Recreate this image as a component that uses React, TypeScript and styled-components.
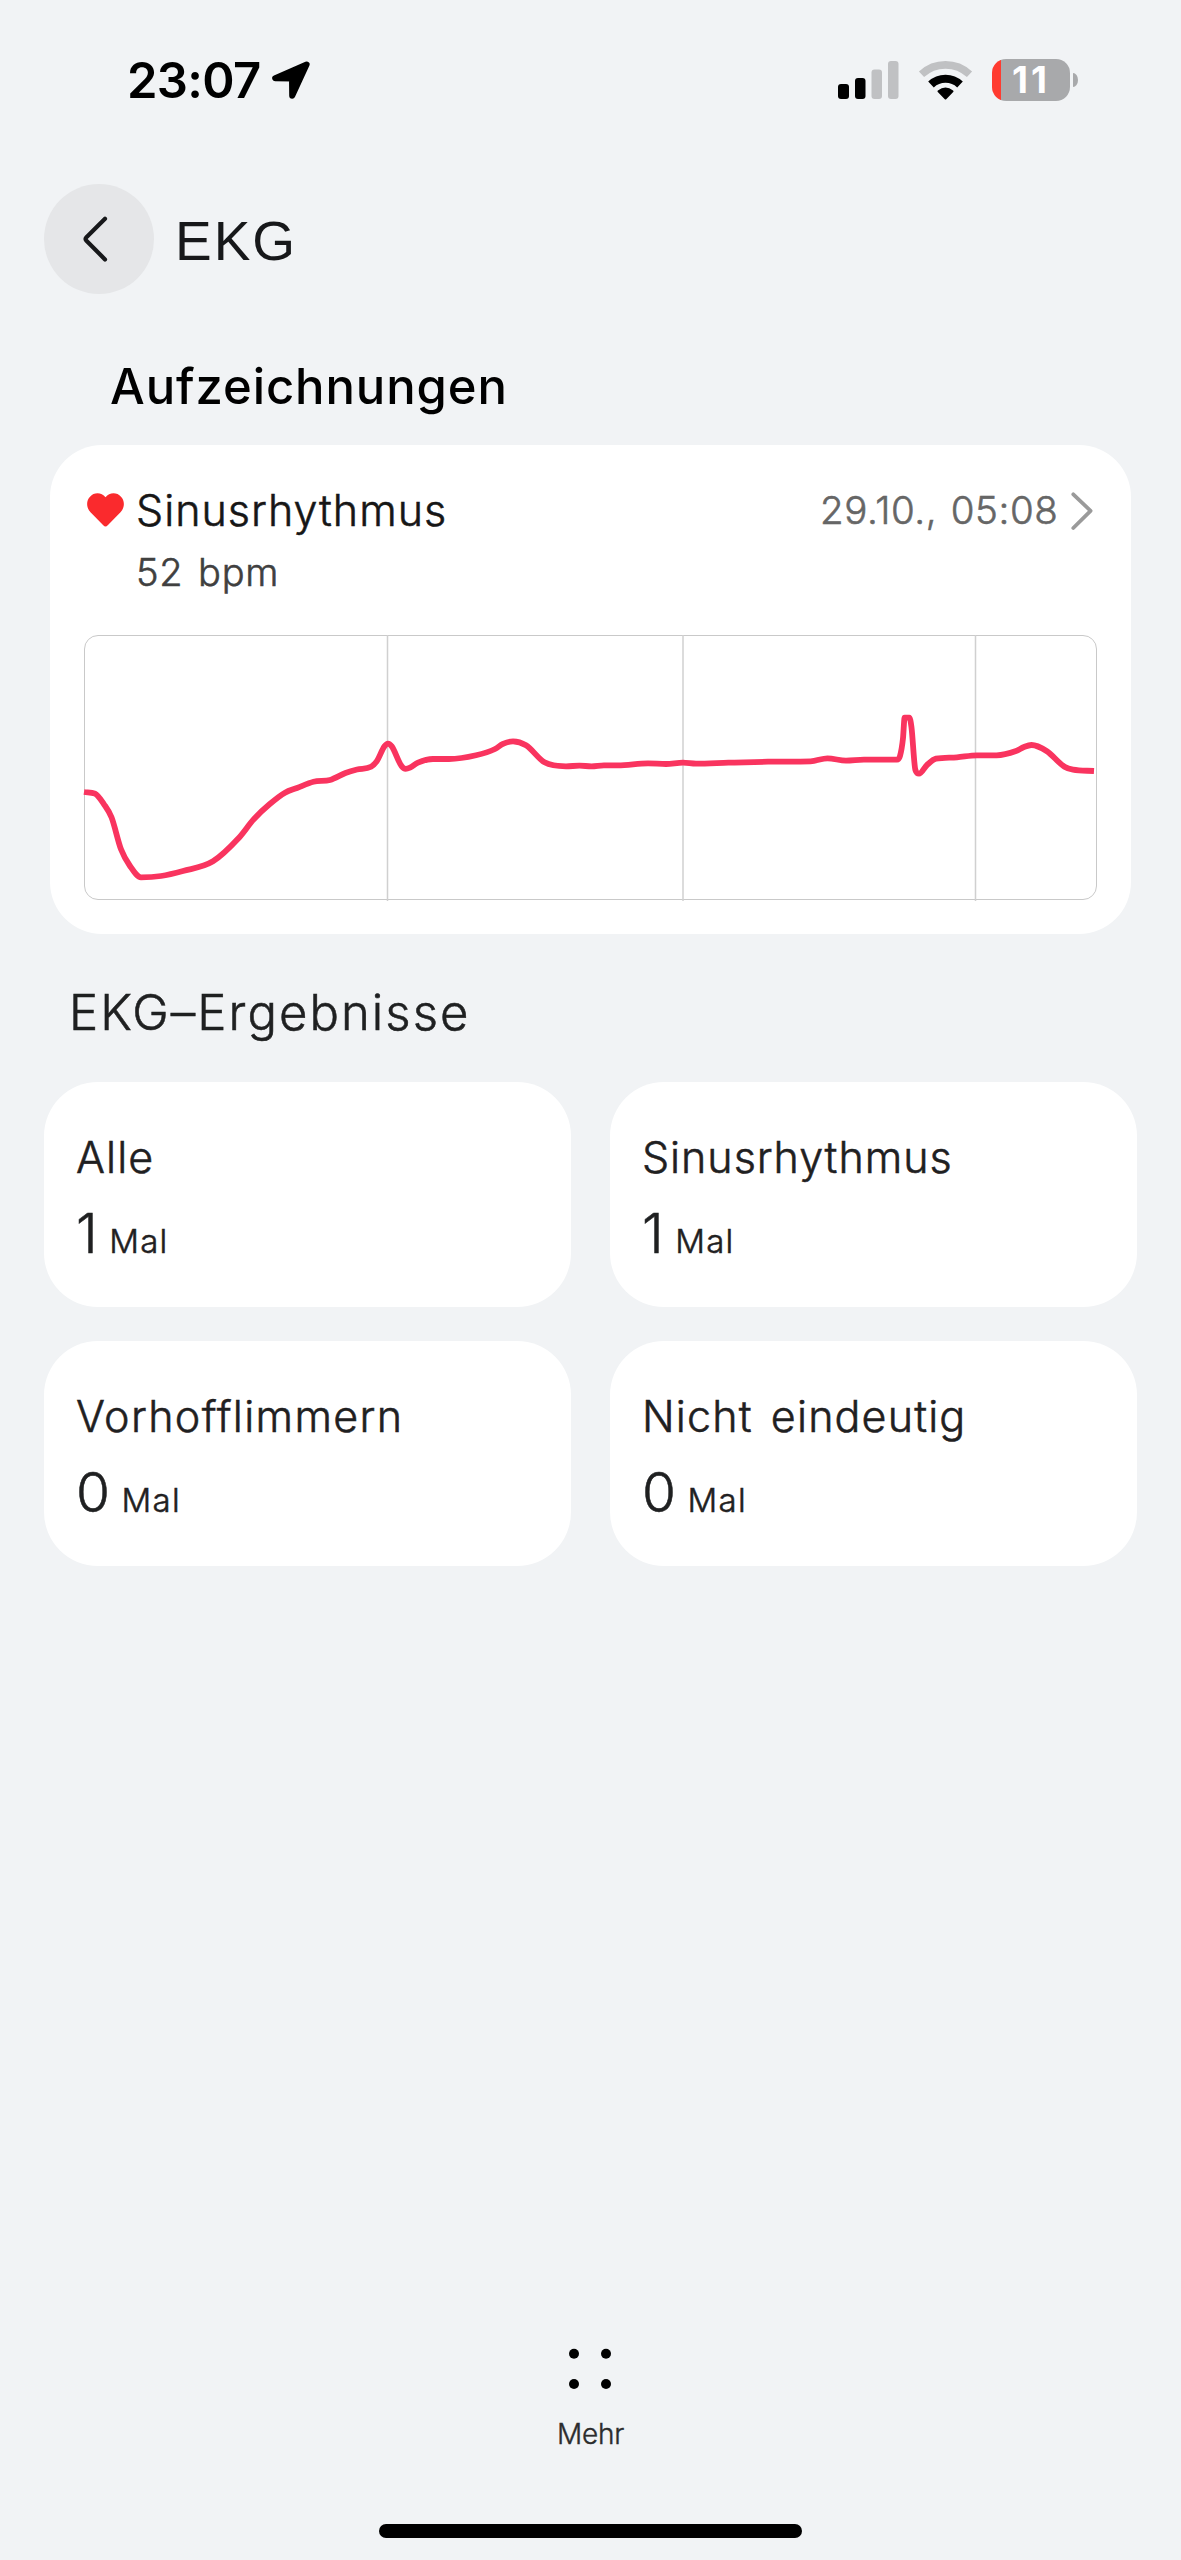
import React from "react";
import styled, { createGlobalStyle, css } from "styled-components";

const GlobalStyle = createGlobalStyle`
  * { box-sizing: border-box; }
  body {
    margin: 0;
    background: #f1f3f5;
    font-family: Inter, "Liberation Sans", sans-serif;
    font-weight: 300;
    color: #1f2021;
  }
  svg { display: block; flex: none; overflow: visible; }
`;

// Light face thickened to sit between the light and regular weights.
const bookWeight = css`
  font-weight: 300;
  -webkit-text-stroke: 0.55px currentColor;
`;

const Screen = styled.div`
  display: flex;
  flex-direction: column;
  width: 1181px;
  min-height: 2560px;
  padding-bottom: 22px;
`;

const StatusBar = styled.div`
  display: flex;
  align-items: center;
  justify-content: space-between;
  height: 160px;
  padding: 0 103px 0 127px;
  color: #000;
`;

const StatusGroup = styled.div<{ $gap: number }>`
  display: flex;
  align-items: center;
  gap: ${(p) => p.$gap}px;
`;

const Clock = styled.span`
  padding-top: 2px;
  font-size: 49px;
  line-height: 60px;
  font-weight: 600;
  letter-spacing: -0.7px;
`;

const Battery = styled.div`
  display: flex;
  align-items: center;
  gap: 3px;
`;

const BatteryBody = styled.div<{ $level: number }>`
  width: 78px;
  height: 42px;
  border-radius: 14px;
  background: linear-gradient(to right, #ff3b30 ${(p) => p.$level}%, #a8a9ab ${(p) => p.$level}%);
  color: #fff;
  font-size: 37px;
  line-height: 42px;
  font-weight: 700;
  letter-spacing: 3px;
  text-align: center;
`;

const BatteryTip = styled.div`
  width: 5px;
  height: 14px;
  border-radius: 0 5px 5px 0 / 0 7px 7px 0;
  background: #a8a9ab;
`;

const Header = styled.header`
  display: flex;
  align-items: center;
  gap: 21px;
  margin-top: 24px;
  padding-left: 44px;
`;

const BackButton = styled.button`
  display: flex;
  align-items: center;
  justify-content: center;
  width: 110px;
  height: 110px;
  padding: 0 8px 0 0;
  border: 0;
  border-radius: 50%;
  background: #e5e6e8;
`;

const PageTitle = styled.h1`
  margin: 0;
  padding-top: 4px;
  font: 400 55px/64px "Liberation Sans", Arial, sans-serif;
  letter-spacing: 2px;
  color: #17181a;
`;

const RecordsTitle = styled.h2`
  margin: 63px 0 0 110px;
  font-size: 49px;
  line-height: 60px;
  font-weight: 500;
  letter-spacing: 0.9px;
  color: #000;
`;

const RecordCard = styled.section`
  width: 1081px;
  height: 489px;
  margin: 28px 0 0 50px;
  padding: 38px 34px 0;
  border-radius: 52px;
  background: #fff;
`;

const RecordHead = styled.div`
  display: flex;
  align-items: center;
  height: 54px;
  padding: 0 4px 0 3px;
`;

const RecordName = styled.span`
  ${bookWeight}
  margin-left: 12px;
  font-size: 43px;
  line-height: 54px;
  letter-spacing: 1px;
  color: #161616;
`;

const RecordDate = styled.span`
  ${bookWeight}
  margin: 0 12.5px 0 auto;
  font-size: 38.5px;
  line-height: 54px;
  letter-spacing: 0.6px;
  word-spacing: 2px;
  color: #666;
`;

const HeartRate = styled.div`
  ${bookWeight}
  margin: 15px 0 0 52px;
  font-size: 38px;
  line-height: 40px;
  letter-spacing: 0.8px;
  word-spacing: 3px;
  color: #404040;
`;

const ChartFrame = styled.div`
  width: 1013px;
  height: 265px;
  margin-top: 43px;
  border: 1px solid #c9c9c9;
  border-radius: 14px;
`;

const ResultsTitle = styled.h2`
  ${bookWeight}
  margin: 49px 0 0 69px;
  font-size: 49px;
  line-height: 60px;
  letter-spacing: 2.05px;
`;

const ResultGrid = styled.section`
  display: grid;
  grid-template-columns: 1fr 1fr;
  grid-auto-rows: 225px;
  gap: 34px 39px;
  margin: 39px 44px 0;
`;

const ResultCard = styled.div`
  padding: 50px 32px 0;
  border-radius: 54px;
  background: #fff;
`;

const ResultLabel = styled.div<{ $tracking: number }>`
  ${bookWeight}
  font-size: 43px;
  line-height: 50px;
  letter-spacing: ${(p) => p.$tracking}px;
  word-spacing: 5px;
`;

const ResultValue = styled.div`
  display: flex;
  align-items: baseline;
  gap: 11.5px;
  margin-top: 21px;
`;

const Count = styled.span`
  ${bookWeight}
  font-size: 55px;
  line-height: 60px;
`;

const Unit = styled.span`
  ${bookWeight}
  font-size: 33px;
  line-height: 40px;
  letter-spacing: 1.3px;
`;

const MoreButton = styled.button`
  display: flex;
  flex-direction: column;
  align-items: center;
  gap: 27px;
  align-self: center;
  margin-top: auto;
  padding: 0;
  border: 0;
  background: none;
  color: #2b2c2d;
  font: 300 28px/34px Inter, "Liberation Sans", sans-serif;
  letter-spacing: -0.2px;
  -webkit-text-stroke: 0.4px currentColor;
`;

const HomeIndicator = styled.div`
  align-self: center;
  width: 423px;
  height: 14px;
  margin-top: 73px;
  border-radius: 7px;
  background: #000;
`;

type Point = [number, number];

const wave: Point[] = [
  [0, 157], [11, 158.7], [20, 169.3], [27.5, 182.3], [37, 214.3], [46, 231], [57, 242.3],
  [77, 241], [99, 236], [129, 226.3], [154.5, 203.3], [170, 184], [185.5, 169.3], [201, 157.7],
  [213, 153], [229.5, 146.7], [246, 145], [261.5, 138], [273, 134.5], [287, 131.7], [292.5, 126.7],
  [300.5, 111.3], [304, 108.6], [307.7, 111.3], [317.5, 131], [321.7, 133.8], [326, 132.6],
  [334, 127.7], [349, 124], [365, 124], [392, 120.3], [411, 114], [419, 108.8], [429, 106.3],
  [442, 110.3], [460.5, 127.3], [482, 131.3], [495.5, 130.7], [507.5, 131.3], [520, 130.3],
  [534, 130.3], [564, 128.3], [582, 129], [599, 127.7], [612, 128.7], [644.5, 127.7],
  [684, 126.7], [726.5, 126.3], [743.5, 123.3], [762, 125.7], [780, 124.7], [813, 124.7],
  [816, 121], [819, 103.3], [820.6, 82.7], [825.3, 82.7], [827.4, 91.7], [831.4, 135], [835, 138.7],
  [843, 130], [852, 123.7], [873, 122.3], [893, 120.3], [912.5, 120.3], [932, 116], [940, 112],
  [947.5, 110], [962.5, 116], [980.5, 131.7], [989, 134.7], [1010, 136],
];

// Monotone cubic interpolation: smooth between samples, flat at each local extreme.
function smoothPath(p: Point[]): string {
  const n = p.length;
  const slope = (i: number) => (p[i + 1][1] - p[i][1]) / (p[i + 1][0] - p[i][0]);
  const tangent = p.map((_, i) => {
    if (i === 0) return slope(0);
    if (i === n - 1) return slope(n - 2);
    const a = slope(i - 1);
    const b = slope(i);
    if (a * b <= 0) return 0;
    return Math.sign(a) * Math.min(Math.abs(a + b) / 2, 3 * Math.abs(a), 3 * Math.abs(b));
  });
  let d = `M${p[0][0]} ${p[0][1]}`;
  for (let i = 0; i < n - 1; i++) {
    const h = (p[i + 1][0] - p[i][0]) / 3;
    d += `C${p[i][0] + h} ${p[i][1] + tangent[i] * h} ${p[i + 1][0] - h} ${p[i + 1][1] - tangent[i + 1] * h} ${p[i + 1][0]} ${p[i + 1][1]}`;
  }
  return d;
}

const EcgChart = () => (
  <ChartFrame>
    <svg width="1010" height="262" viewBox="1 1 1010 262" fill="none">
      {[303.5, 599, 891.5].map((x) => (
        <line key={x} x1={x} x2={x} y1="0" y2="266" stroke="#d0d0d0" strokeWidth="1.5" />
      ))}
      <path d={smoothPath(wave)} stroke="#f9345f" strokeWidth="5.8" strokeLinejoin="round" />
    </svg>
  </ChartFrame>
);

const LocationArrow = () => (
  <svg width="38" height="38" viewBox="0 0 38 38">
    <path d="M34.6 3.4 3.2 17.2 20 17.5 20.2 34.8Z" fill="#000" stroke="#000" strokeWidth="6" strokeLinejoin="round" />
  </svg>
);

const Signal = () => (
  <svg width="61" height="38" viewBox="0 0 61 38">
    <rect x="0" y="23" width="11" height="15" rx="3" />
    <rect x="17" y="17" width="10.5" height="21" rx="3" />
    <rect x="33.5" y="8.5" width="10.5" height="29.5" rx="3" fill="#c0c1c3" />
    <rect x="50" y="0" width="10.5" height="38" rx="3" fill="#c0c1c3" />
  </svg>
);

const Wifi = () => (
  <svg width="53" height="39" viewBox="0 0 53 39" fill="none">
    <path d="M2.5 13.3A35.2 35.2 0 0 1 50.5 13.3" stroke="#c0c1c3" strokeWidth="7.6" />
    <path d="M12 23.5A21.2 21.2 0 0 1 41 23.5" stroke="#000" strokeWidth="8.2" />
    <path d="M26.5 37.5 19.5 30.3Q26.5 25 33.5 30.3Z" fill="#000" stroke="#000" strokeWidth="2" strokeLinejoin="round" />
  </svg>
);

const Heart = () => (
  <svg width="37" height="34" viewBox="0 0 37 34">
    <path
      d="M18.5 33.6Q17.5 33.6 16 32L3.5 19.3C-1 14.5-.8 7.5 3 3.7 7-.9 14.5-1 18.5 4.3 22.5-1 30-.9 34 3.7 37.8 7.5 38 14.5 33.5 19.3L21 32Q19.5 33.6 18.5 33.6Z"
      fill="#fa2a2d"
    />
  </svg>
);

const results = [
  { label: "Alle", count: 1, tracking: 1.1 },
  { label: "Sinusrhythmus", count: 1, tracking: 0.95 },
  { label: "Vorhofflimmern", count: 0, tracking: 1.35 },
  { label: "Nicht eindeutig", count: 0, tracking: 1.15 },
];

export default function App() {
  return (
    <Screen>
      <GlobalStyle />
      <StatusBar>
        <StatusGroup $gap={12}>
          <Clock>23:07</Clock>
          <LocationArrow />
        </StatusGroup>
        <StatusGroup $gap={20}>
          <Signal />
          <Wifi />
          <Battery>
            <BatteryBody $level={11.5}>11</BatteryBody>
            <BatteryTip />
          </Battery>
        </StatusGroup>
      </StatusBar>

      <Header>
        <BackButton aria-label="Zurück">
          <svg width="24" height="44" viewBox="0 0 24 44" fill="none">
            <path d="M22 1.8 3.2 20.6Q1.8 22 3.2 23.4L22 42.4" stroke="#17181a" strokeWidth="4.2" strokeLinecap="round" />
          </svg>
        </BackButton>
        <PageTitle>EKG</PageTitle>
      </Header>

      <RecordsTitle>Aufzeichnungen</RecordsTitle>
      <RecordCard>
        <RecordHead>
          <Heart />
          <RecordName>Sinusrhythmus</RecordName>
          <RecordDate>29.10., 05:08</RecordDate>
          <svg width="22" height="38" viewBox="0 0 22 38" fill="none">
            <path d="M2.3 3.3 19.6 19.8 2.3 37" stroke="#9a9a9a" strokeWidth="3.8" strokeLinecap="round" strokeLinejoin="round" />
          </svg>
        </RecordHead>
        <HeartRate>52 bpm</HeartRate>
        <EcgChart />
      </RecordCard>

      <ResultsTitle>EKG–Ergebnisse</ResultsTitle>
      <ResultGrid>
        {results.map((r) => (
          <ResultCard key={r.label}>
            <ResultLabel $tracking={r.tracking}>{r.label}</ResultLabel>
            <ResultValue>
              <Count>{r.count}</Count>
              <Unit>Mal</Unit>
            </ResultValue>
          </ResultCard>
        ))}
      </ResultGrid>

      <MoreButton>
        <svg width="44" height="42" viewBox="0 0 44 42">
          {[6, 38].map((x) => [5.7, 36].map((y) => <circle key={`${x}-${y}`} cx={x} cy={y} r="5" fill="#000" />))}
        </svg>
        Mehr
      </MoreButton>
      <HomeIndicator />
    </Screen>
  );
}
